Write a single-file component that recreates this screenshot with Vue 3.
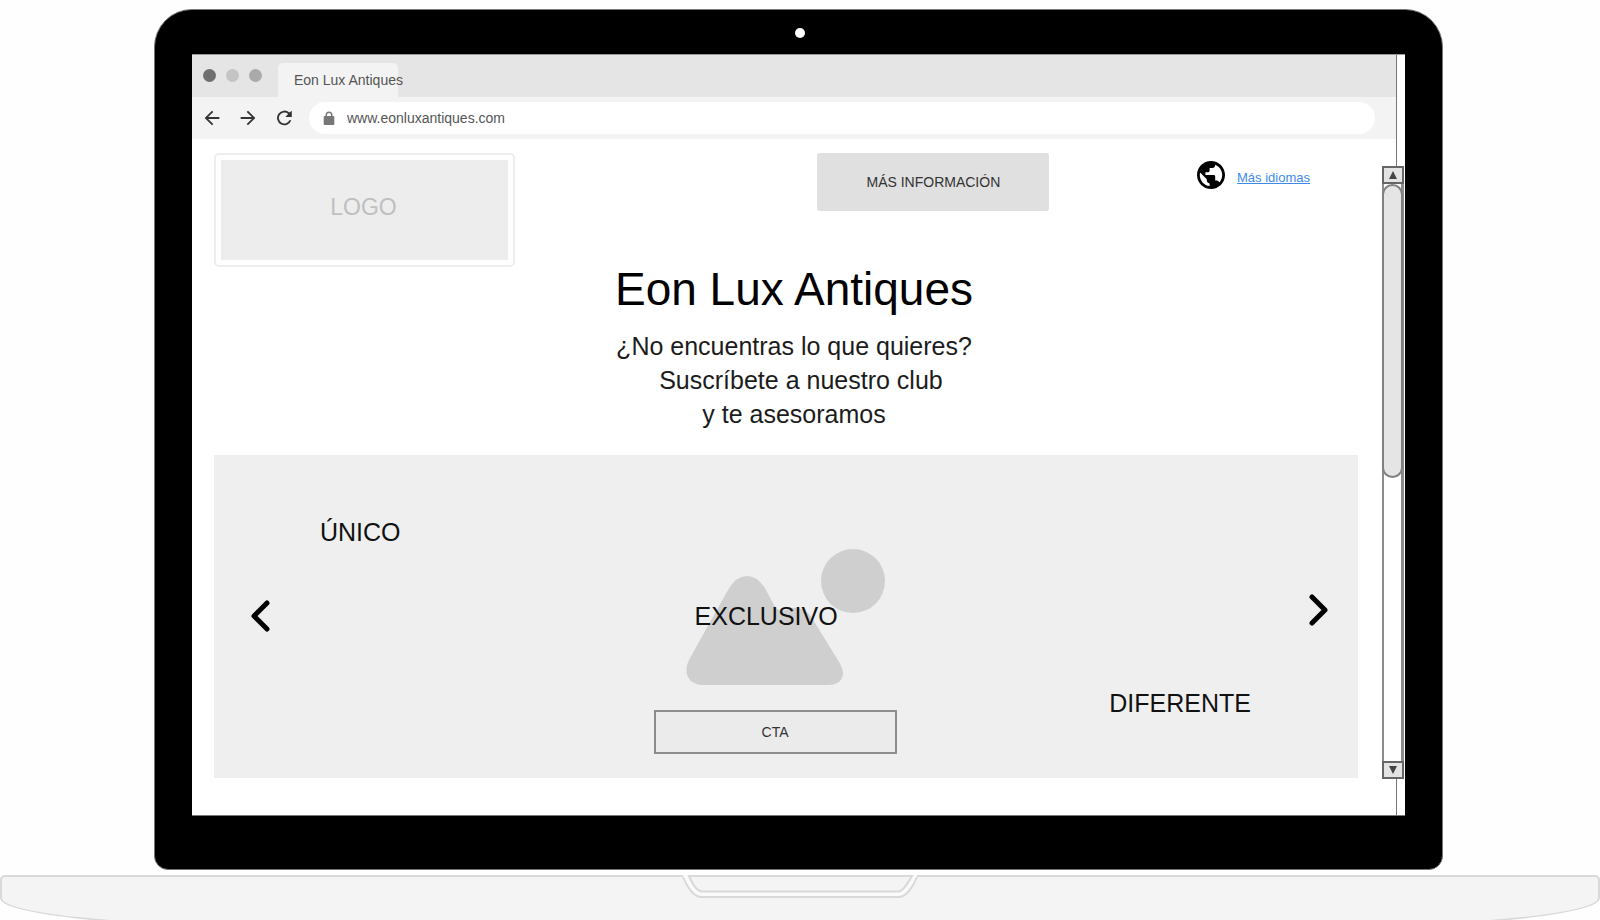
<script setup>
import { ref } from 'vue'

const url = ref('www.eonluxantiques.com')
const lines = ['¿No encuentras lo que quieres?', '\u00a0\u00a0Suscríbete a nuestro club', 'y te asesoramos']
</script>

<template>
  <div class="laptop">
    <div class="lid">
      <span class="camera"></span>
      <div class="screen">
        <div class="browser">
          <div class="tabs">
            <span class="dot dark"></span>
            <span class="dot light"></span>
            <span class="dot"></span>
            <div class="tab">Eon Lux Antiques</div>
          </div>
          <div class="toolbar">
            <button class="nav" aria-label="Atrás">
              <svg viewBox="0 0 24 24"><path d="M20 11H7.8l5.6-5.6L12 4l-8 8 8 8 1.4-1.4L7.8 13H20z" /></svg>
            </button>
            <button class="nav" aria-label="Adelante">
              <svg viewBox="0 0 24 24"><path d="M12 4l-1.4 1.4 5.6 5.6H4v2h12.2l-5.6 5.6L12 20l8-8z" /></svg>
            </button>
            <button class="nav" aria-label="Recargar">
              <svg viewBox="0 0 24 24"><path d="M17.9 6.1A8 8 0 1 0 20 14.500H17.900A6 6 0 1 1 16.500 7.600L13.500 11H20.500V4z" /></svg>
            </button>
            <div class="address">
              <svg class="lock" viewBox="0 0 12 14"><path d="M2.5 5V4a3.5 3.5 0 0 1 7 0v1h.8q1 0 1 1v7q0 1-1 1H1.7q-1 0-1-1V6q0-1 1-1zM4 5h4V4a2 2 0 0 0-4 0z" /></svg>
              <input v-model="url" type="text" aria-label="Dirección" />
            </div>
          </div>

          <main class="page">
            <header class="header">
              <div class="logo"><div class="logo-fill">LOGO</div></div>
              <button class="info">MÁS INFORMACIÓN</button>
              <div class="language">
                <svg viewBox="2 2 20 20"><path d="M12 2C6.48 2 2 6.48 2 12s4.48 10 10 10 10-4.48 10-10S17.52 2 12 2zm-1 17.93c-3.95-.49-7-3.85-7-7.93 0-.62.08-1.21.21-1.79L9 15v1c0 1.1.9 2 2 2v1.93zm6.9-2.54c-.26-.81-1-1.39-1.9-1.39h-1v-3c0-.55-.45-1-1-1H8v-2h2c.55 0 1-.45 1-1V7h2c1.1 0 2-.9 2-2v-.41c2.93 1.19 5 4.06 5 7.41 0 2.08-.8 3.97-2.1 5.39z" /></svg>
                <a href="#">Más idiomas</a>
              </div>
            </header>

            <section class="hero">
              <h1>Eon Lux Antiques</h1>
              <p v-for="line in lines" :key="line">{{ line }}</p>
            </section>

            <section class="carousel">
              <button class="arrow prev" aria-label="Anterior">
                <svg viewBox="0 0 19 32"><path d="M16 3L3 16l13 13" /></svg>
              </button>
              <span class="word unique">ÚNICO</span>
              <div class="slide">
                <div class="picture">
                  <svg viewBox="0 0 243 137">
                    <circle cx="199" cy="33" r="32" />
                    <path d="M36 110L74 42Q82 28 93 28Q104 28 112 42L120 57Q124 65 132 62Q148 55 158 70L185 114C194 128 187 137 174 137H49C34 137 28 124 36 110z" />
                  </svg>
                  <span class="word exclusive">EXCLUSIVO</span>
                </div>
                <button class="cta">CTA</button>
              </div>
              <span class="word different">DIFERENTE</span>
              <button class="arrow next" aria-label="Siguiente">
                <svg viewBox="0 0 19 32"><path d="M3 3l13 13L3 29" /></svg>
              </button>
            </section>
          </main>
        </div>

        <div class="scrollbar">
          <button class="step" aria-label="Subir"><svg viewBox="0 0 10 8"><path d="M5 0l4 8H1z" /></svg></button>
          <div class="track"><div class="thumb"></div></div>
          <button class="step" aria-label="Bajar"><svg viewBox="0 0 10 8"><path d="M5 8l4-8H1z" /></svg></button>
        </div>
      </div>
    </div>

    <div class="base">
      <div class="shell"></div>
      <svg class="notch" viewBox="0 0 236 26">
        <path class="groove" d="M1 2C5 12 12 22 19 22H217C224 22 231 12 235 2V0H1z" />
        <path class="edge" d="M1 2C5 12 12 22 19 22H217C224 22 231 12 235 2" />
        <path class="plate" d="M7 1C10 8 15 16.500 20 16.500H216C221 16.500 226 8 230 1z" />
      </svg>
    </div>
  </div>
</template>

<style>
body {
  margin: 0;
  background: #fefefe;
}
</style>

<style scoped>
* {
  box-sizing: border-box;
}

.laptop {
  font-family: "Liberation Sans", Arial, sans-serif;
  font-size: 14px;
  color: #333;
  padding-top: 9px;
  overflow: hidden;
}

button {
  font: inherit;
  color: inherit;
  padding: 0;
  border: 0;
  background: none;
}

svg {
  display: block;
}

.lid {
  position: relative;
  margin: 0 157px 0 154px;
  padding: 44px 37px 53px;
  background: #000;
  border: 1px solid #777;
  border-radius: 38px 38px 14px 14px;
}

.camera {
  position: absolute;
  top: 18px;
  left: 50%;
  width: 10px;
  height: 10px;
  margin-left: -4px;
  border-radius: 50%;
  background: #fff;
}

.screen {
  position: relative;
  padding-right: 8px;
  background: #fff;
  border-top: 1px solid #999;
  border-bottom: 1px solid #777;
}

.browser {
  border-right: 1px solid #777;
}

.tabs {
  display: flex;
  align-items: flex-start;
  gap: 10px;
  height: 42px;
  padding: 8px 12px 0 11px;
  background: #e5e5e5;
}

.dot {
  width: 13px;
  height: 13px;
  margin-top: 6px;
  border-radius: 50%;
  background: #aaa;
}

.dot.dark {
  background: #6f6f6f;
}

.dot.light {
  background: #c4c4c4;
}

.tab {
  width: 120px;
  height: 34px;
  margin-left: 6px;
  padding-left: 16px;
  line-height: 34px;
  white-space: nowrap;
  color: #555;
  background: #f3f3f3;
  border-radius: 5px 5px 0 0;
}

.toolbar {
  display: flex;
  align-items: center;
  gap: 14px;
  height: 42px;
  padding: 0 21px 0 9px;
  background: #f3f3f3;
}

.nav svg {
  width: 22px;
  height: 22px;
  fill: #333;
}

.address {
  flex: 1;
  display: flex;
  align-items: center;
  gap: 12px;
  height: 32px;
  padding: 0 14px;
  background: #fff;
  border-radius: 16px;
}

.lock {
  width: 12px;
  height: 14px;
  fill: #777;
}

.address input {
  flex: 1;
  min-width: 0;
  padding: 0;
  border: 0;
  outline: 0;
  background: none;
  font: inherit;
  color: #555;
}

.page {
  padding: 14px 38px 37px 22px;
}

.header {
  display: grid;
  grid-template-columns: 301px 301fr 232px 147fr auto;
  align-items: start;
  padding-right: 48px;
}

.logo {
  padding: 5px;
  border: 2px solid #eee;
  border-radius: 5px;
}

.logo-fill {
  height: 100px;
  padding-right: 2px;
  line-height: 94px;
  text-align: center;
  font-size: 23px;
  color: #bfbfc1;
  background: #ededed;
}

.info {
  grid-column: 3;
  height: 58px;
  background: #e0e0e0;
  border-radius: 3px;
}

.language {
  grid-column: 5;
  display: flex;
  align-items: flex-start;
  gap: 12px;
  padding-top: 8px;
}

.language svg {
  width: 28px;
  height: 28px;
}

.language a {
  font-size: 13px;
  line-height: 34px;
  color: #3d8be6;
}

.hero {
  padding-left: 16px;
  text-align: center;
}

h1 {
  margin: 0 0 18px;
  font-size: 46px;
  font-weight: 400;
  line-height: 44px;
  color: #000;
}

p {
  margin: 0;
  font-size: 25px;
  line-height: 34px;
  color: #1c1c1c;
}

.carousel {
  display: grid;
  grid-template-columns: 19px 50px auto 251fr 243px 211fr auto 58px 19px;
  margin-top: 24px;
  padding: 93px 30px 24px 37px;
  background: #efefef;
}

.arrow {
  align-self: start;
  margin-top: 52px;
}

.arrow.next {
  grid-column: 9;
  margin-top: 46px;
}

.arrow svg {
  width: 19px;
  height: 32px;
  fill: none;
  stroke: #000;
  stroke-width: 5;
  stroke-linecap: round;
  stroke-linejoin: round;
}

.word {
  font-size: 25px;
  line-height: 28px;
  color: #111;
}

.unique {
  grid-column: 3;
  margin-top: -30px;
}

.slide {
  grid-column: 5;
}

.picture {
  display: grid;
}

.picture > * {
  grid-area: 1 / 1;
}

.picture svg {
  width: 100%;
  fill: #cfcfcf;
}

.exclusive {
  margin-top: 54px;
  padding-right: 18px;
  text-align: center;
}

.cta {
  width: 100%;
  height: 44px;
  margin-top: 25px;
  background: #ebebeb;
  border: 2px solid #8c8c8c;
}

.different {
  grid-column: 7;
  align-self: end;
  margin-bottom: 37px;
}

.scrollbar {
  position: absolute;
  top: 111px;
  right: 1px;
  bottom: 36px;
  width: 22px;
  display: flex;
  flex-direction: column;
}

.step {
  display: grid;
  place-items: center;
  height: 18px;
  background: #e3e3e3;
  border: 2px solid #666;
}

.step svg {
  width: 10px;
  height: 8px;
  fill: #444;
}

.track {
  flex: 1;
  background: #fff;
  border: solid #8c8c8c;
  border-width: 0 3px 0 2px;
}

.thumb {
  height: 51%;
  margin: 0 -2px;
  background: #e5e5e5;
  border: 2px solid #808080;
  border-radius: 11px;
}

.base {
  position: relative;
  height: 46px;
  margin-top: 5px;
  overflow: hidden;
}

.shell {
  height: 52px;
  background: #f5f4f5;
  border: 2px solid #d9d9d9;
  border-radius: 5px 5px 260px 260px / 5px 5px 29px 29px;
}

.notch {
  position: absolute;
  top: 0;
  left: 50%;
  width: 236px;
  height: 26px;
  margin-left: -118px;
}

.groove {
  fill: #fafafa;
}

.edge {
  fill: none;
  stroke: #d9d9d9;
  stroke-width: 2;
}

.plate {
  fill: #f5f4f5;
  stroke: #d9d9d9;
  stroke-width: 2;
}
</style>
